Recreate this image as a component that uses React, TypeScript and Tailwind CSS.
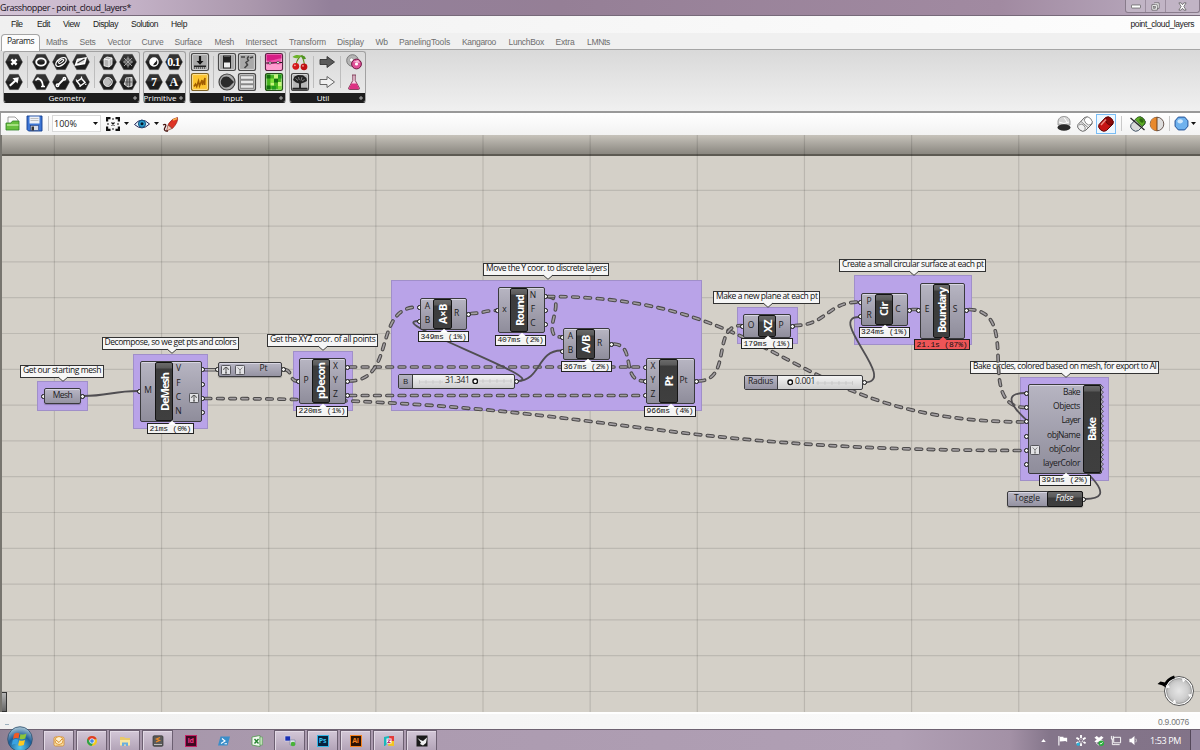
import React, { useLayoutEffect, useRef } from "react";

/* Text whose letter spacing is adjusted so that it fills the width w. */
function Fit({ w, children, className = "" }: { w: number; children: string; className?: string }) {
  const ref = useRef<HTMLSpanElement>(null);
  useLayoutEffect(() => {
    const el = ref.current;
    if (!el) return;
    el.style.letterSpacing = "0px";
    const natural = el.getBoundingClientRect().width;
    el.style.letterSpacing = `${(w - natural) / children.length}px`;
  }, [w, children]);
  return (
    <span ref={ref} className={`block shrink-0 whitespace-pre leading-none ${className}`}>
      {children}
    </span>
  );
}

const UI = "font-['Open_Sans',sans-serif]";

/* ---------- Ribbon ---------- */

function Hex({ children }: { children: React.ReactNode }) {
  return (
    <svg viewBox="0 0 20 20" className="h-5 w-5">
      <path d="M5.7 2.4h8.6L18.4 10l-4.1 7.6H5.7L1.6 10z" fill="#1c1c1c" stroke="#3c3c3c" strokeWidth=".6" strokeLinejoin="round" />
      <path d="M6 3h8l3.4 6.2c-5 .3-10 .3-14.8 0z" fill="#fff" opacity=".1" />
      <g fill="none" stroke="#fff" strokeWidth="1.5">{children}</g>
    </svg>
  );
}

function Tile({ children, bg = "#a9a9a9", line = "#4a4a4a" }: { children: React.ReactNode; bg?: string; line?: string }) {
  return (
    <svg viewBox="0 0 20 20" className="h-5 w-5">
      <rect x="1.5" y="1.5" width="17" height="17" rx="1.8" fill={bg} stroke={line} strokeWidth="1.2" />
      <rect x="2.6" y="2.6" width="14.8" height="14.8" rx="1" fill="none" stroke="#fff" strokeOpacity=".55" strokeWidth=".9" />
      {children}
    </svg>
  );
}

const I = {
  cross: <Hex><path d="M7.400 7.400l5.200 5.200M12.600 7.400l-5.200 5.200" strokeWidth="2.300" /></Hex>,
  arrow: <Hex><path d="M5.800 13.800l5.500-5" strokeWidth="2.200" /><path d="M8.500 6.300l6.300-1-1.200 6.300z" fill="#fff" stroke="none" /></Hex>,
  ring: <Hex><ellipse cx="10" cy="10" rx="4.800" ry="3.600" strokeWidth="1.900" /></Hex>,
  arc: <Hex><path d="M6 7c3.500-.5 5.500 2 6 7" strokeWidth="1.800" /><path d="M4.500 8.500l3-3M10 14.500h4" /></Hex>,
  swirl: <Hex><ellipse cx="10" cy="10" rx="6" ry="3.200" transform="rotate(-35 10 10)" strokeWidth="1.300" /><ellipse cx="10.500" cy="9.500" rx="3" ry="1.200" transform="rotate(-35 10 10)" strokeWidth="1" /></Hex>,
  bone: <Hex><path d="M7 13l6-6" strokeWidth="1.800" /><circle cx="6.500" cy="13.300" r="1.200" /><circle cx="13.400" cy="6.700" r="1.200" /></Hex>,
  sheet: <Hex><path d="M4.500 13l2-5.500 8.500-1.500-1.500 5.500z" fill="#ddd" /><path d="M6.500 11l7-4" stroke="#333" strokeWidth="1.300" /></Hex>,
  grid: <Hex><path d="M6 9.500l4.500-3 3.500 4-4.500 3.200z" strokeWidth="1.400" /><path d="M5 7.500l1.800 2.500M14 12.500l1.500-.5M9 15v-1.500M10.500 4.500v2" strokeWidth="1.200" /></Hex>,
  box: <Hex><path d="M6 7l3-2 5 1v6.500L11 15l-5-1.200z" fill="#b5b5b5" strokeWidth=".8" /><path d="M6 7l5 1v7M11 8l3-2" strokeWidth=".8" /></Hex>,
  atom: <Hex><path d="M6 6l8 8M14 6l-8 8M10 4.500v11M5 10h10" stroke="#aaa" strokeWidth=".9" /><circle cx="10" cy="10" r="3.300" stroke="#aaa" strokeWidth=".8" /></Hex>,
  blob: <Hex><path d="M5.500 10c0-3 3-5 5-4.500s4 2 3.800 4.500-2 4.500-4.500 4.500-4.300-2-4.300-4.500z" fill="#bdbdbd" strokeWidth=".8" /><path d="M10.500 6l3.500 4-3.500 4" stroke="#777" strokeWidth=".7" /></Hex>,
  mesh: <Hex><path d="M6 12c1-1 1.500-3 2-6l6-.5V14L10 15z" fill="#999" strokeWidth=".8" /><path d="M9 6v8M11.500 6v8.500M7 10h7" stroke="#333" strokeWidth=".6" /></Hex>,
  ball: <Hex><circle cx="10" cy="10" r="4" /><path d="M6 10a4 4 0 0 1 6.800-2.800c0 3-3 3-3.800 6.600A4 4 0 0 1 6 10z" fill="#fff" stroke="none" /></Hex>,
  cherries: (
    <svg viewBox="0 0 20 20" className="h-5 w-5">
      <path d="M6 12.500C7 8 9 5 12 3.500c1 3 2 6 2.500 9" fill="none" stroke="#5f8a1e" strokeWidth="1.100" />
      <path d="M2.500 5c3-3 6-2 9-1.500-2 3-5 3.500-9 1.500z" fill="#6db32c" />
      <path d="M11 4c3-1 4 0 5 3-3 .5-4.500-.5-5-3z" fill="#4e9422" />
      <circle cx="5.800" cy="14.300" r="3.400" fill="#d3181a" /><circle cx="14" cy="14.800" r="3.400" fill="#c01013" />
      <circle cx="4.900" cy="13.300" r=".9" fill="#f7a6a0" /><circle cx="13" cy="13.800" r=".9" fill="#f7a6a0" />
    </svg>
  ),
  tree: <Tile bg="#b5b5b5" line="#444"><path d="M3 8l1.500-3.500L8 3l5 .3L16.500 6l.5 3-3 1.500-3 1V16H9v-4.500l-3-1z" fill="#222" /><path d="M2.500 16.700h15" stroke="#222" strokeWidth="2" /><path d="M5.500 6.500l2.500 2M12 5l-1 3.500M14.500 7.500l-2.500 1.500M8.500 5l.8 3" stroke="#aaa" strokeWidth=".7" /></Tile>,
  arrowDark: <svg viewBox="0 0 20 20" className="h-5 w-5"><path d="M3 7.500h7V4.500l7.500 5.500-7.500 5.500v-3H3z" fill="#5a5a5a" stroke="#333" strokeWidth=".9" /></svg>,
  arrowLight: <svg viewBox="0 0 20 20" className="h-5 w-5"><path d="M3 7.500h7V4.500l7.500 5.500-7.500 5.500v-3H3z" fill="#f1f1f1" stroke="#666" strokeWidth="1" /></svg>,
  discs: (
    <svg viewBox="0 0 20 20" className="h-5 w-5">
      <circle cx="8.500" cy="8.500" r="5.800" fill="#b5b5b5" stroke="#666" strokeWidth=".8" />
      <circle cx="7.500" cy="8" r="2" fill="#fff" stroke="#888" strokeWidth=".6" />
      <circle cx="12.500" cy="12" r="4.900" fill="#df4f96" stroke="#6e1a44" strokeWidth="1" />
      <path d="M9 10l7 1-2-3z" fill="#fbd3e5" opacity=".8" />
      <circle cx="12.500" cy="12" r="1.600" fill="#fff" />
    </svg>
  ),
  flask: (
    <svg viewBox="0 0 20 20" className="h-5 w-5">
      <path d="M8 3h4M8.800 3v5.500L4.600 16q-.4 1.500 1.300 1.500h8.200q1.700 0 1.300-1.500L11.200 8.500V3" fill="#f7d7e5" stroke="#7d3553" strokeWidth=".9" />
      <path d="M7.400 11.500h5.200l2.500 4.800q0 .8-1 .8H5.900q-1 0-1-.8z" fill="#dd3283" />
    </svg>
  ),
  import: <Tile><path d="M10 4v7" stroke="#111" strokeWidth="2.200" /><path d="M6.500 9h7L10 12.800z" fill="#111" /><path d="M4 14.300h12" stroke="#222" strokeWidth="1.600" /><path d="M4 16h12" stroke="#222" strokeWidth="1" strokeDasharray="1 1" /></Tile>,
  scribble: <Tile bg="#fcc52f" line="#7d6225"><path d="M4 14.500l1.500-2.500 1.200 2.500L8.500 9l1 5 2.500-6 .5 5L15 6l-.3 7" fill="none" stroke="#a05c00" strokeWidth="1.500" /></Tile>,
  slider: <Tile><rect x="6.500" y="4" width="7" height="12" fill="#eee" stroke="#222" /><rect x="7" y="4.500" width="6" height="6" fill="#222" /></Tile>,
  knob: <svg viewBox="0 0 20 20" className="h-5 w-5"><circle cx="10" cy="10" r="8" fill="#aaa" stroke="#444" strokeWidth="1.200" /><path d="M9.500 4.500a5.500 5.500 0 0 1 4 2L17 10l-3.500 3.500a5.500 5.500 0 1 1-4-9z" fill="#2b2b2b" /></svg>,
  graph: <Tile><path d="M4 5h4M12 4.500c-2 1-2 3-.5 3.500M12 8l-3 2.500 1.500 2.500-3 3M13 6l3-1" stroke="#444" strokeWidth="1.600" fill="none" /></Tile>,
  list: <Tile bg="#888"><path d="M4 5.500h12M4 10h12M4 14.500h12" stroke="#e9e9e9" strokeWidth="2.500" /></Tile>,
  gradient: <Tile bg="#f254ad" line="#5b2344"><path d="M2.500 2.500h15v4c-6 0-8 3-15 2z" fill="#d61d85" /><path d="M2.500 13c6-2 9 0 15-1v5.500h-15z" fill="#ff9ccf" /><path d="M2 11h3M7 11c3 0 4-.500 6-.500M15 10.500h3" stroke="#222" strokeWidth="1" fill="none" /><circle cx="6" cy="11" r="1.200" fill="#fff" stroke="#222" strokeWidth=".6" /><circle cx="14" cy="10.500" r="1.200" fill="#fff" stroke="#222" strokeWidth=".6" /></Tile>,
  pixels: (
    <Tile bg="#44b31c" line="#254f18">
      <path d="M2.500 2.500h4v4h-4zM10 6.500h4v4h-4zM2.500 13.500h4v4h-4z" fill="#14700f" />
      <path d="M10 2.500h4v4h-4zM6.500 10.500h3.500v3H6.500zM14 10h3.500v4H14z" fill="#c9f57e" />
      <path d="M6.500 6.500H10v4H6.500zM14 14h3.500v3.500H14z" fill="#7fe03a" /><path d="M14 2.500h3.500v4H14zM8 14h4v3.500H8z" fill="#239a1e" />
    </Tile>
  ),
};

function HexText({ t }: { t: string }) {
  return (
    <div className="relative h-5 w-5">
      <Hex><path d="" /></Hex>
      <span className="absolute inset-0 flex items-center justify-center font-['Liberation_Serif',serif] text-[12px] font-bold leading-none tracking-[-0.8px] text-white">{t}</span>
    </div>
  );
}

function Col({ children }: { children: React.ReactNode }) {
  return <div className="flex h-10 w-5 flex-col">{children}</div>;
}
const Sep = () => <div className="mx-[3px] my-1 h-8 w-px bg-[#bdbdbd]" />;

function Panel({ name, w, children }: { name: string; w: string; children: React.ReactNode }) {
  return (
    <div className={`flex h-[52px] flex-col overflow-hidden rounded-[3px] border border-[#a2a2a2] border-b-[#1d1d1d] bg-gradient-to-b from-[#dadada] to-[#ececec] ${w}`}>
      <div className="flex h-[41px] shrink-0">{children}</div>
      <div className={`relative -mx-px flex h-[10px] shrink-0 items-center justify-center bg-[#1d1d1d] pb-px pr-[8px] text-[8px] leading-none text-white ${UI}`}>
        <span>{name}</span>
        <svg viewBox="0 0 6 6" className="absolute right-[3px] h-[4px] w-[4px]"><path d="M3 0v6M0 3h6" stroke="#bbb" strokeWidth="1.400" /></svg>
      </div>
    </div>
  );
}

/* ---------- Canvas ---------- */

type Box = { x: number; y: number; w: number; h: number };
const at = (b: Box) => ({ left: b.x, top: b.y, width: b.w, height: b.h });

const groups: Box[] = [
  { x: 37, y: 381, w: 51, h: 30 },
  { x: 133, y: 353.5, w: 75, h: 75 },
  { x: 292.5, y: 351, w: 60, h: 60 },
  { x: 390.5, y: 280, w: 311.5, h: 131 },
  { x: 736.5, y: 307, w: 61.5, h: 37 },
  { x: 854, y: 275, w: 118, h: 69.5 },
  { x: 1020, y: 377, w: 89, h: 103.5 },
];

const notes: (Box & { t: string; tail: number })[] = [
  { x: 20, y: 365, w: 83.5, h: 13, tail: 42, t: "Get our starting mesh" },
  { x: 101.5, y: 337, w: 137, h: 13, tail: 69, t: "Decompose, so we get pts and colors" },
  { x: 267, y: 334, w: 111, h: 13, tail: 55, t: "Get the XYZ coor. of all points" },
  { x: 483, y: 263, w: 126, h: 13, tail: 63.5, t: "Move the Y coor. to discrete layers" },
  { x: 713, y: 290.5, w: 107, h: 13, tail: 54, t: "Make a new plane at each pt" },
  { x: 839, y: 258.5, w: 147, h: 13, tail: 74, t: "Create a small circular surface at each pt" },
  { x: 970, y: 361, w: 189, h: 13, tail: 95, t: "Bake circles, colored based on mesh, for export to AI" },
];

const timers: (Box & { t: string; tail: number; hot?: boolean })[] = [
  { x: 147, y: 423, w: 46.5, h: 11, tail: 23.5, t: "21ms (0%)" },
  { x: 296, y: 405.5, w: 52, h: 11, tail: 25.5, t: "220ms (1%)" },
  { x: 418, y: 331, w: 51, h: 11, tail: 25, t: "349ms (1%)" },
  { x: 495, y: 334.5, w: 51, h: 11, tail: 25.5, t: "407ms (2%)" },
  { x: 561, y: 361, w: 51, h: 11, tail: 25.5, t: "367ms (2%)" },
  { x: 644, y: 405.5, w: 52, h: 11, tail: 25.5, t: "966ms (4%)" },
  { x: 741, y: 338, w: 52, h: 11, tail: 26, t: "179ms (1%)" },
  { x: 858.5, y: 326.5, w: 51.5, h: 11, tail: 25.5, t: "324ms (1%)" },
  { x: 914, y: 339, w: 56, h: 11, tail: 28, t: "21.1s (87%)", hot: true },
  { x: 1039, y: 474.5, w: 51.5, h: 11, tail: 25.5, t: "391ms (2%)" },
];

type Pin = [label: string, x: number, y: number];
type NodeData = Box & { name: string; len: number; bx: number; bw: number; ins: Pin[]; outs: Pin[] };
const nodes: NodeData[] = [
  { name: "DeMesh", len: 38, x: 140, y: 361, w: 61.5, h: 61, bx: 15, bw: 18, ins: [["M", 148, 390.5]], outs: [["V", 178.5, 369], ["F", 178.5, 383.5], ["C", 178.5, 398], ["N", 178.5, 412]] },
  { name: "pDecon", len: 36, x: 299, y: 358, w: 47, h: 46, bx: 12.5, bw: 18.5, ins: [["P", 306, 380.5]], outs: [["X", 335.5, 366.5], ["Y", 335.5, 380.5], ["Z", 335.5, 395]] },
  { name: "A×B", len: 20, x: 420, y: 298, w: 47, h: 32, bx: 13, bw: 18.5, ins: [["A", 427.5, 306.5], ["B", 427.5, 320.5]], outs: [["R", 456.5, 313.5]] },
  { name: "Round", len: 31, x: 498, y: 287, w: 46.5, h: 46, bx: 12, bw: 18, ins: [["x", 504.5, 310]], outs: [["N", 533, 295.5], ["F", 533, 310], ["C", 533, 324]] },
  { name: "A/B", len: 18, x: 563, y: 327.5, w: 47, h: 32, bx: 13, bw: 18.5, ins: [["A", 570.5, 336.5], ["B", 570.5, 350.5]], outs: [["R", 599.5, 343.5]] },
  { name: "Pt", len: 10.5, x: 646, y: 358, w: 49, h: 46, bx: 13, bw: 18.5, ins: [["X", 653, 366.5], ["Y", 653, 380.5], ["Z", 653, 395]], outs: [["Pt", 683.5, 380.5]] },
  { name: "XZ", len: 12.5, x: 743, y: 314, w: 48, h: 23.5, bx: 15, bw: 18, ins: [["O", 751, 325.5]], outs: [["P", 781, 325.5]] },
  { name: "Cir", len: 14, x: 861, y: 293, w: 47, h: 32.5, bx: 13.5, bw: 18, ins: [["P", 869, 301.5], ["R", 869, 316]], outs: [["C", 898, 309.5]] },
  { name: "Boundary", len: 45, x: 919.5, y: 282.5, w: 45.5, h: 56, bx: 13, bw: 17.5, ins: [["E", 927, 309.5]], outs: [["S", 955, 309.5]] },
];

const solid = [
  "M83 396C108 396 113 391 138 391",
  "M204 368.500H216M204 371H216",
  "M517 381C541 381 537 350.500 561 350.500",
  "M517 381C555 381 383 321 418 321",
  "M864 382.500C900 382.500 826 317 859 317",
  "M1085 499C1155 499 958 393 1026 393",
];
const dashed = [
  "M284 369.500C293 370 289 381 297 381",
  "M204 398.500C615 398.500 615 450.500 1026 450.500",
  "M349 367H644",
  "M349 395.500H644",
  "M349 381C397 381 372 307 418 307",
  "M470 313.500C482 313.500 485 310.500 496 310.500",
  "M547 296.500C570 296.500 538 337 561 337",
  "M547 296.500C787 296.500 787 422 1026 422",
  "M613 344C637 344 620 381 644 381",
  "M698 381C733 381 711 325.500 741 325.500",
  "M794 325.500C827 325.500 827 302 859 302",
  "M911 309.500H918",
  "M968 309.500C1024 309.500 973 407.500 1026 407.500",
];

const metal = "rounded-[2px] border border-[#3a3a3d] bg-gradient-to-b from-[#b7b5c2] to-[#8f8d9b] shadow-[inset_0_1px_0_#d8d6e2]";
const pill = "rounded-[2px] border border-[#3a3a3d] bg-gradient-to-b from-[#b9b7c5] to-[#9593a2] shadow-[inset_0_1px_0_#d8d6e2,0_1px_1px_rgba(0,0,0,0.25)]";
const black = "rounded-[2px] border border-[#141414] bg-[linear-gradient(180deg,#6a6a6a_0,#5a5a5a_5px,#3b3b3b_6px,#3f3f3f_100%)]";

function Port({ x, y }: { x: number; y: number }) {
  return <div className="absolute -ml-[2.5px] -mt-[2.5px] h-[5px] w-[5px] rounded-full border border-[#111] bg-[#f0f0f0]" style={{ left: x, top: y }} />;
}

function PinLabel({ pin: [t, x, y] }: { pin: Pin }) {
  return (
    <span className={`absolute -ml-[10px] -mt-[6px] flex h-[11px] w-5 items-center justify-center text-[8.5px] leading-none text-[#1b1b20] ${UI}`} style={{ left: x, top: y }}>
      {t}
    </span>
  );
}

/* Component name that reads from bottom to top, len pixels long. */
function VText({ children, len }: { children: string; len: number }) {
  const ref = useRef<HTMLSpanElement>(null);
  useLayoutEffect(() => {
    const el = ref.current;
    if (!el) return;
    el.style.letterSpacing = "0px";
    el.style.letterSpacing = `${(len - el.getBoundingClientRect().height) / children.length}px`;
  }, [len, children]);
  return <span ref={ref} className={`block shrink-0 rotate-180 whitespace-nowrap text-[11px] font-bold leading-none text-white [text-orientation:sideways] [writing-mode:vertical-rl] ${UI}`}>{children}</span>;
}

function Modifier({ b, kind }: { b: Box; kind: "graft" | "flatten" }) {
  return (
    <svg viewBox="0 0 10 10" className="absolute" style={at(b)}>
      <rect x=".5" y=".5" width="9" height="9" rx=".8" fill="#e3e3e6" stroke="#4a4a50" strokeWidth=".9" />
      {kind === "graft" ? (
        <path d="M5 8V2.500M2.500 5Q3 2.500 5 2.300Q7 2.500 7.500 5M4 8h2" fill="none" stroke="#444" strokeWidth=".9" />
      ) : (
        <path d="M5 8V5L2.700 2.500M5 5l2.300-2.500M4 8h2" fill="none" stroke="#777" strokeWidth=".9" />
      )}
    </svg>
  );
}

function Canvas() {
  const cols = Array.from({ length: 11 }, (_, i) => 54.4 + i * 107.15);
  const rows = Array.from({ length: 15 }, (_, i) => 190.3 + i * 35.8);
  const bake: [string, number, number][] = [["Bake", 392.5, 17], ["Objects", 406.5, 27], ["Layer", 421, 18.5], ["objName", 435.5, 33], ["objColor", 449.5, 31], ["layerColor", 464, 37]];
  return (
    <div className="absolute left-0 top-[-135px] h-[750px] w-[1200px]">
      <svg viewBox="0 0 1200 750" className="absolute inset-0 h-full w-full">
        {cols.map((x) => <path key={x} d={`M${x} 135V713`} stroke="#000" strokeOpacity=".12" strokeWidth="1.200" />)}
        {rows.map((y) => <path key={y} d={`M0 ${y}H1200`} stroke="#000" strokeOpacity=".11" strokeWidth="1.200" />)}
      </svg>
      {groups.map((g) => <div key={g.x} className="absolute border border-[#a08fc9] bg-[#b9a3e8]" style={at(g)} />)}
      {notes.map((n) => (
        <div key={n.t} className="absolute flex items-center justify-start border border-[#333] bg-[#f6f6f6] pb-[2px] pl-[2px] text-[#111]" style={at(n)}>
          <Fit w={n.w - 5.5} className={`text-[8.5px] ${UI}`}>{n.t}</Fit>
          <svg viewBox="0 0 10 6" className="absolute top-[10px] h-[6px] w-[10px] -translate-x-1/2" style={{ left: n.tail }}>
            <path d="M0 .7L5 5l5-4.300z" fill="#f6f6f6" /><path d="M0 1L5 5.300L10 1" fill="none" stroke="#333" strokeWidth=".9" />
          </svg>
        </div>
      ))}
      <svg viewBox="0 0 1200 750" fill="none" className="absolute inset-0 h-full w-full">
        {dashed.map((d) => (
          <g key={d} strokeLinecap="round" strokeDasharray="5.600 6.700" strokeDashoffset="-1">
            <path d={d} stroke="#4d4b4b" strokeWidth="3.700" />
            <path d={d} stroke="#a39fa2" strokeWidth="1.600" />
          </g>
        ))}
        {solid.map((d, i) => <path key={d} d={d} stroke="#504e52" strokeWidth={i === 1 ? 1.2 : 1.8} />)}
      </svg>

      {nodes.map((n) => (
        <React.Fragment key={n.name}>
          {n.ins.map((p) => <Port key={p[0]} x={n.x - 1} y={p[2] + 0.5} />)}
          {n.outs.map((p) => <Port key={p[0]} x={n.x + n.w + 1} y={p[2] + 0.5} />)}
          <div className={`absolute ${metal}`} style={at(n)}>
            <div className={`absolute inset-y-0 flex items-center justify-center ${black}`} style={{ left: n.bx - 1, width: n.bw }}>
              <VText len={n.len}>{n.name}</VText>
            </div>
          </div>
          {[...n.ins, ...n.outs].map((p) => <PinLabel key={p[0] + p[1]} pin={p} />)}
        </React.Fragment>
      ))}
      <Modifier b={{ x: 188.5, y: 393, w: 10, h: 10 }} kind="graft" />

      <Port x={43} y={396} /><Port x={82} y={396} />
      <div className={`absolute flex items-center justify-center pb-[2px] text-[#1b1b20] ${pill}`} style={at({ x: 44, y: 388, w: 37, h: 15.5 })}>
        <Fit w={19.5} className={`text-[8.5px] ${UI}`}>Mesh</Fit>
      </div>
      <Port x={217} y={369.5} /><Port x={283} y={369.5} />
      <div className={`absolute ${pill}`} style={at({ x: 218, y: 362, w: 64, h: 15 })} />
      <Modifier b={{ x: 220.5, y: 364.5, w: 10, h: 10 }} kind="graft" />
      <Modifier b={{ x: 234.5, y: 364.5, w: 10, h: 10 }} kind="flatten" />
      <PinLabel pin={["Pt", 263.5, 369]} />

      <Port x={516} y={381} />
      <div className="absolute flex rounded-[2px] border border-[#3a3a3d] bg-gradient-to-b from-[#f4f4f4] to-[#cfcfcf]" style={at({ x: 398, y: 373.5, w: 117, h: 15 })}>
        <div className={`flex w-[14px] items-center justify-center border-r border-[#3a3a3d] bg-gradient-to-b from-[#b9b7c5] to-[#9593a2] pb-px text-[8px] leading-none ${UI}`}>B</div>
        <div className="flex flex-1 items-center pl-8">
          <Fit w={24.5} className={`pb-[2px] text-[8.5px] text-[#222] ${UI}`}>31.341</Fit>
          <svg viewBox="0 0 7 7" className="ml-[2px] h-[6.5px] w-[6.5px] shrink-0"><circle cx="3.500" cy="3.500" r="2.500" fill="#fff" stroke="#111" strokeWidth="1.500" /></svg>
          <svg viewBox="0 0 34 6" className="h-[6px] w-[34px]"><path d="M0 3H34M5 1v4M12 1v4M19 1v4M26 1v4M33 1v4" stroke="#c2c2c2" strokeWidth=".7" /></svg>
        </div>
        <svg viewBox="0 0 24 6" className="absolute left-[20px] top-[4px] h-[6px] w-[24px]"><path d="M0 3H24M.5 1v4M7 1v4M14 1v4M21 1v4" stroke="#c6c6c6" strokeWidth=".7" /></svg>
      </div>

      <Port x={864} y={382.5} />
      <div className="absolute flex rounded-[2px] border border-[#3a3a3d] bg-gradient-to-b from-[#f4f4f4] to-[#cfcfcf]" style={at({ x: 743.5, y: 375, w: 119, h: 15 })}>
        <div className="flex w-[33px] items-center justify-center border-r border-[#3a3a3d] bg-gradient-to-b from-[#b9b7c5] to-[#9593a2] pb-[2px]">
          <Fit w={25} className={`text-[8.5px] text-[#1b1b20] ${UI}`}>Radius</Fit>
        </div>
        <div className="flex flex-1 items-center pl-[9px]">
          <svg viewBox="0 0 7 7" className="mr-[2px] h-[6.5px] w-[6.5px] shrink-0"><circle cx="3.500" cy="3.500" r="2.500" fill="#fff" stroke="#111" strokeWidth="1.500" /></svg>
          <Fit w={20} className={`pb-[2px] text-[8.5px] text-[#222] ${UI}`}>0.001</Fit>
          <svg viewBox="0 0 38 6" className="h-[6px] w-[38px]"><path d="M1 3H38M3 1v4M10 1v4M17 1v4M24 1v4M31 1v4M37.500 1v4" stroke="#c2c2c2" strokeWidth=".7" /></svg>
        </div>
      </div>

      {bake.map(([t, y]) => <Port key={t} x={1026.5} y={y + 0.5} />)}
      <div className={`absolute ${metal}`} style={at({ x: 1027.5, y: 384, w: 74, h: 90 })}>
        <svg viewBox="0 0 5 88" className="absolute -right-[3px] top-0 h-[88px] w-[5px]">
          <path d={"M0 0H2" + "l2.500 2.400l-2.500 2.400".repeat(18) + "V88H0z"} fill="#a9a7b4" stroke="#444" strokeWidth=".8" />
        </svg>
        <div className={`absolute inset-y-0 left-[54px] flex w-[18px] items-center justify-center ${black}`}>
          <VText len={23}>Bake</VText>
        </div>
      </div>
      {bake.map(([t, y, w]) => (
        <div key={t} className="absolute -mt-[6px] flex h-[11px] items-center justify-end text-[#1b1b20]" style={{ left: 1040, top: y, width: 40 }}>
          <Fit w={w} className={`text-[8.5px] ${UI}`}>{t}</Fit>
        </div>
      ))}
      <Modifier b={{ x: 1029.5, y: 445, w: 10, h: 10 }} kind="flatten" />

      <Port x={1083} y={499} />
      <div className={`absolute flex ${pill}`} style={at({ x: 1006.5, y: 491, w: 76, h: 16 })}>
        <div className="flex w-[39px] items-center justify-center pb-[2px]"><Fit w={26} className={`text-[8.5px] text-[#1b1b20] ${UI}`}>Toggle</Fit></div>
        <div className={`-my-px -mr-px flex flex-1 items-center justify-center pb-[2px] ${black}`}><Fit w={17.5} className={`text-[8.5px] italic text-white ${UI}`}>False</Fit></div>
      </div>

      {timers.map((n) => (
        <div key={n.t} className={`absolute flex items-center justify-center border border-[#222] ${n.hot ? "bg-[#ee5557]" : "bg-[#f4f4f4]"}`} style={at(n)}>
          <svg viewBox="0 0 10 5" className="absolute -top-[4px] h-[5px] w-[9px] -translate-x-1/2" style={{ left: n.tail }}>
            <path d="M0 5L5 .500l5 4.500z" fill={n.hot ? "#ee5557" : "#fff"} />
          </svg>
          <Fit w={n.w - 5} className="font-['Liberation_Mono',monospace] text-[8px] text-[#111]">{n.t}</Fit>
        </div>
      ))}

      {/* compass */}
      <svg viewBox="0 0 40 40" className="absolute left-[1156px] top-[670px] h-10 w-10">
        <defs><radialGradient id="dial"><stop offset="0" stopColor="#e6e6e6" /><stop offset=".7" stopColor="#cfcfcf" /><stop offset="1" stopColor="#b9b9b9" /></radialGradient></defs>
        <circle cx="23" cy="21" r="14.500" fill="#fdfdfd" stroke="#555" strokeWidth="1" />
        <circle cx="23" cy="21" r="12.500" fill="url(#dial)" stroke="#777" strokeWidth=".6" />
        <path d="M26 8.500l3.500 1.500-2.500 2.500zM35.500 24l-1.500 3.500-2-3zM20 33.500l-3.500-1.500 2.500-2.500zM10.500 18l1.500-3.500 2 3z" fill="#fff" />
        <path d="M9 15Q11.500 9 18.500 6.800" fill="none" stroke="#000" strokeWidth="2.800" />
        <path d="M1.500 14l3-2.500 4.500 1 1 5-4-2.300z" fill="#000" />
      </svg>
    </div>
  );
}

/* ---------- Page ---------- */

const menus: [string, number, string][] = [["File", 11.5, "w-[26px]"], ["Edit", 13, "w-[26px]"], ["View", 16.5, "w-[30px]"], ["Display", 25, "w-[38px]"], ["Solution", 27, "w-[40px]"], ["Help", 16, "w-[30px]"]];
const tabs: [string, number, string][] = [
  ["Maths", 21.5, "w-[33.500px]"], ["Sets", 16, "w-[28px]"], ["Vector", 23.5, "w-[34px]"], ["Curve", 22, "w-[33px]"], ["Surface", 27.5, "w-[40px]"], ["Mesh", 19.5, "w-[31px]"], ["Intersect", 31.5, "w-[43.500px]"],
  ["Transform", 37, "w-[48px]"], ["Display", 27, "w-[38.500px]"], ["Wb", 12, "w-[23.500px]"], ["PanelingTools", 51, "w-[63px]"], ["Kangaroo", 34, "w-[46.500px]"], ["LunchBox", 35.5, "w-[47px]"], ["Extra", 19, "w-[31.500px]"], ["LMNts", 23, "w-[40px]"],
];
const Caret = ({ className = "" }: { className?: string }) => (
  <svg viewBox="0 0 5 3" className={`h-[3px] w-[5px] shrink-0 ${className}`}><path d="M0 0h5L2.500 3z" fill="#111" /></svg>
);

function Cylinder({ a, b, line, children }: { a: string; b: string; line: string; children?: React.ReactNode }) {
  return (
    <svg viewBox="0 0 18 18" className="h-[18px] w-[18px] shrink-0">
      <path d="M2 9.500L8.500 2.500Q11 .8 14 3.500T16 9L9.500 15.500Q6.500 17.500 3.500 14.800T2 9.500z" fill={a} stroke={line} strokeWidth="1" />
      <ellipse cx="12.300" cy="6" rx="4.400" ry="3.300" transform="rotate(48 12.300 6)" fill={b} stroke={line} strokeWidth=".7" />
      {children}
    </svg>
  );
}

function TaskIcon({ k }: { k: number }) {
  const c = "h-3 w-3";
  switch (k) {
    case 0:
      return <svg viewBox="0 0 12 12" className={c}><rect x="1" y="2" width="10" height="9" rx="1.500" fill="#f6dca4" stroke="#d28a2d" strokeWidth=".8" /><circle cx="6" cy="5.500" r="4" fill="#fff1cf" stroke="#e09a38" /><path d="M3 5l3 2.500L9 4" fill="none" stroke="#d28a2d" /></svg>;
    case 1:
      return <svg viewBox="0 0 12 12" className={c}><circle cx="6" cy="6" r="5" fill="#f2c91c" /><path d="M1.300 4.200A5 5 0 0 1 10.700 4.200H6L4 7z" fill="#dc3b2c" /><path d="M1.500 3.800A5 5 0 0 0 5.500 11l2-3.500L4 7z" fill="#2ba24a" /><circle cx="6" cy="6" r="2.300" fill="#4286e8" stroke="#fff" strokeWidth=".8" /></svg>;
    case 2:
      return <svg viewBox="0 0 12 12" className={c}><path d="M1 2h4l1 1h5v7H1z" fill="#e8c96b" /><path d="M1 5h10v5.500H1z" fill="#f8e6a2" /><path d="M3 7.500h6v3.500H7V9.500H5V11H3z" fill="#6aaede" /></svg>;
    case 3:
      return <svg viewBox="0 0 12 12" className={c}><rect x="1" y=".8" width="10" height="10.500" rx="1.200" fill="#5a5a5a" stroke="#333" strokeWidth=".7" /><path d="M8 2.500L4.500 4 7.500 5.500 4 7" stroke="#f08a24" strokeWidth="1.300" fill="none" /><path d="M2 9.500h8" stroke="#bbb" /></svg>;
    case 5:
      return <svg viewBox="0 0 12 12" className={c}><path d="M2.500 1.500H12L9.500 10.500H0z" fill="#3b8ec9" /><path d="M4 3.500L7 6 3 8.500M6.500 8.700h2.500" stroke="#fff" strokeWidth="1.100" fill="none" /></svg>;
    case 6:
      return <svg viewBox="0 0 12 12" className={c}><path d="M1 2l8-1.500v11L1 10z" fill="#f4faf2" stroke="#4f9a4c" strokeWidth=".8" /><path d="M9 2h2.500v8H9z" fill="#bfe0b6" stroke="#4f9a4c" strokeWidth=".5" /><path d="M3.500 4l4 4.500M7.500 4l-4 4.500" stroke="#278431" strokeWidth="1.400" /></svg>;
    case 7:
      return <svg viewBox="0 0 12 12" className={c}><path d="M1 1h5.500v5H1z" fill="#1a2fb2" stroke="#dcdcf4" strokeWidth=".6" /><path d="M6 5h5v5H6z" fill="#e5e9f1" stroke="#6b7e9d" strokeWidth=".6" /><circle cx="9" cy="9" r="2.300" fill="#49b339" /></svg>;
    case 10:
      return <svg viewBox="0 0 12 12" className={c}><path d="M1 2l5-1 .5 5L2 11H1z" fill="#1bb7ba" /><path d="M6 1h5v5L6.500 6z" fill="#e33a3a" /><path d="M11 6v5l-6-.2L6 6z" fill="#f3c421" /><rect x="3.500" y="3.500" width="5" height="5" fill="#fff" /><path d="M4.500 5h3l-3 2.500h3" stroke="#c02b74" fill="none" /></svg>;
    case 11:
      return <svg viewBox="0 0 12 12" className={c}><rect x=".5" y=".5" width="11" height="11" fill="#1a1a1a" /><path d="M1.500 3l3 2 2.500 1L11 2.500 10 8 7 10.500 4 9 5 7.500z" fill="#efefef" /></svg>;
    default: {
      const s = k === 4 ? "bg-[#400a22] text-[#ef3582] border-[#c42467]" : k === 8 ? "bg-[#08233d] text-[#34c5f4] border-[#34b5e4]" : "bg-[#2c1303] text-[#f58220] border-[#f58220]";
      return <div className={`flex h-3 w-3 items-center justify-center border pb-px text-[7px] font-bold leading-none tracking-[-0.3px] ${UI} ${s}`}>{k === 4 ? "Id" : k === 8 ? "Ps" : "Ai"}</div>;
    }
  }
}

export default function App() {
  return (
    <div className="flex h-[750px] w-[1200px] flex-col overflow-hidden bg-[#f0f0f0] font-['Liberation_Sans',sans-serif] text-[#1a1a1a]">
      {/* title bar */}
      <header className="flex h-4 shrink-0 items-start justify-between border-b border-[#776a7a] bg-[linear-gradient(90deg,#d3c4d6_0,#c6b4c9_120px,#ab98ad_250px,#93809a_330px,#957f96_560px,#a18aa1_1000px,#b3a2b7_1130px,#c9bfcd_1200px)]">
        <Fit w={131} className={`pt-[3px] text-[9px] text-[#15101a] ${UI}`}>Grasshopper - point_cloud_layers*</Fit>
        <div className="flex h-[13px] w-[75px] rounded-b-[3px] border border-t-0 border-[#887b8b] bg-[#c1b4c5]">
          <div className="flex w-[20px] items-center justify-center border-r border-[#9b8d9e]"><svg viewBox="0 0 10 5" className="h-[5px] w-[10px]"><rect x=".5" y="1" width="9" height="3" rx=".5" fill="#fff" stroke="#555" strokeWidth=".7" /></svg></div>
          <div className="flex w-[20px] items-center justify-center border-r border-[#9b8d9e]"><svg viewBox="0 0 10 10" className="h-[9px] w-[9px]"><path d="M3.500 1h5.500v6H7M1 3h6v6H1z" fill="#fff" stroke="#555" strokeWidth=".8" /><rect x="3" y="5" width="2" height="2" fill="#999" stroke="#555" strokeWidth=".6" /></svg></div>
          <div className="flex flex-1 items-center justify-center"><svg viewBox="0 0 10 10" className="h-[9px] w-[9px]"><path d="M1 1h2.500L5 3l1.500-2H9L6.500 5 9 9H6.500L5 7 3.500 9H1l2.500-4z" fill="#fff" stroke="#555" strokeWidth=".8" /></svg></div>
        </div>
      </header>

      {/* menu */}
      <nav className="flex h-[17px] shrink-0 items-center justify-between bg-gradient-to-r from-[#f0f0f0] to-[#fdfdfd] pl-[11px] pr-[6px]">
        <div className="flex items-center">
          {menus.map(([t, w, cls]) => <div key={t} className={`flex ${cls}`}><Fit w={w} className="text-[8.5px]">{t}</Fit></div>)}
        </div>
        <Fit w={63.5} className="text-[8.5px]">point_cloud_layers</Fit>
      </nav>

      {/* tabs */}
      <div className="flex h-[17px] shrink-0 items-end bg-[#f0f0f0]">
        <div className="z-10 mb-[-1px] ml-[1px] flex h-[17px] w-[39px] shrink-0 items-center justify-center rounded-t-[4px] border border-b-0 border-[#a5a5a5] bg-[#fcfcfc] pb-[4px]">
          <Fit w={27} className={`text-[8.5px] ${UI}`}>Params</Fit>
        </div>
        <div className="flex h-[17px] flex-1 items-center border-b border-[#a5a5a5] pl-[6px] pt-[2px] text-[#6e6e6e]">
          {tabs.map(([t, w, cls]) => <div key={t} className={`flex ${cls}`}><Fit w={w} className="text-[8.5px]">{t}</Fit></div>)}
        </div>
      </div>

      {/* ribbon */}
      <div className="flex h-[61px] shrink-0 items-start gap-[3px] bg-gradient-to-b from-[#d9d9d9] to-[#f0f0f0] pl-[2.5px] pt-[1px]">
        <Panel name="Geometry" w="w-[137px]">
          <Col>{I.cross}{I.arrow}</Col><Sep />
          <Col>{I.ring}{I.arc}</Col><Col>{I.swirl}{I.bone}</Col><Col>{I.sheet}{I.grid}</Col><Sep />
          <Col>{I.box}{I.blob}</Col><Col>{I.atom}{I.mesh}</Col>
        </Panel>
        <Panel name="Primitive" w="w-[43px]">
          <Col>{I.ball}<HexText t="7" /></Col>
          <Col><HexText t="0.1" /><HexText t="A" /></Col>
        </Panel>
        <Panel name="Input" w="w-[97px]">
          <Col>{I.import}{I.scribble}</Col><Sep />
          <Col>{I.slider}{I.knob}</Col><Col>{I.graph}{I.list}</Col><Sep />
          <Col>{I.gradient}{I.pixels}</Col>
        </Panel>
        <Panel name="Util" w="w-[77px]">
          <Col>{I.cherries}{I.tree}</Col><Sep />
          <Col>{I.arrowDark}{I.arrowLight}</Col><Sep />
          <Col>{I.discs}{I.flask}</Col>
        </Panel>
      </div>

      {/* canvas toolbar */}
      <div className="flex h-6 shrink-0 items-center border-l border-t-2 border-[#999] bg-gradient-to-b from-white to-[#f2f2f2] pb-px pl-[4px]">
        <svg viewBox="0 0 16 17" className="h-[17px] w-4"><path d="M3 2h7l3 3v8H3z" fill="#fdfdfd" stroke="#888" strokeWidth=".8" /><path d="M1 8l5 0 1.500-2H14v9H1z" fill="#68bf3e" stroke="#2f8024" strokeWidth=".8" /><path d="M2 9h11.500v2H2z" fill="#a5e07f" /></svg>
        <svg viewBox="0 0 17 17" className="ml-[5px] h-[17px] w-[17px]"><path d="M1 1h15v15H2.500L1 14.500z" fill="#3c76d6" stroke="#123c8d" strokeWidth=".9" /><rect x="3.500" y="1.500" width="10" height="7" fill="#eef2f8" /><path d="M4.500 3.500h8M4.500 5.500h8" stroke="#aaa" strokeWidth=".7" /><rect x="4.500" y="10.500" width="8" height="5" fill="#d6dce8" stroke="#203f7d" strokeWidth=".6" /><rect x="5.500" y="11.500" width="2.500" height="4" fill="#333" /></svg>
        <div className="ml-[5px] h-[15px] w-px bg-[#c9c9c9]" />
        <div className="ml-[3px] flex h-[17px] w-[49px] items-center border border-[#dadada] bg-white pl-[1px]">
          <Fit w={23} className={`text-[9px] ${UI}`}>100%</Fit><Caret className="ml-auto mr-[2px]" />
        </div>
        <svg viewBox="0 0 14 14" className="ml-[5px] h-[14px] w-[14px]"><path d="M1 4.500V1h3.500M9.500 1H13v3.500M13 9.500V13H9.500M4.500 13H1V9.500" fill="none" stroke="#111" strokeWidth="2.400" /><path d="M5.500 5.500l3 3M8.500 5.500l-3 3" stroke="#111" strokeWidth="1.200" /><path d="M7 1v2M7 11v2M1 7h2M11 7h2" stroke="#111" /></svg>
        <Caret className="ml-[4px] h-[2.5px] w-[4px]" />
        <svg viewBox="0 0 16 11" className="ml-[5px] h-[12px] w-4"><path d="M.5 6Q7.500-2.500 15.500 5.500Q8 13 .5 6z" fill="#e3f3fb" stroke="#225" strokeWidth="1" /><circle cx="8" cy="5.300" r="3.600" fill="#2a9dcf" stroke="#124e7d" /><circle cx="8" cy="5.300" r="1.500" fill="#061a2c" /></svg>
        <Caret className="ml-[4px] h-[2.5px] w-[4px]" />
        <svg viewBox="0 0 17 16" className="ml-[3px] h-4 w-[17px]"><path d="M6 8.500Q10 2 15.500 1.500Q16.500 6 10.500 12.500z" fill="#de3325" stroke="#86150d" strokeWidth=".6" /><path d="M11 4l4-1.500" stroke="#f7b24a" strokeWidth="1.800" /><path d="M6 9l4 3.500L4.500 15z" fill="#f0c9b8" stroke="#7a1c10" strokeWidth=".6" /><path d="M1 9c3-1.500 3.500 0 2 2.500s0 4 3 3.500" fill="none" stroke="#43120e" strokeWidth="1.300" /></svg>
        <div className="ml-auto flex items-center">
          <svg viewBox="0 0 16 18" className="h-[18px] w-4"><path d="M2 6Q3 1.500 8 1.500T14 6v4H2z" fill="#d5d5d5" stroke="#888" strokeWidth=".8" /><ellipse cx="8" cy="12.500" rx="6.500" ry="3.300" fill="#2a2a2a" /><path d="M8 2.500l3 4.500M3 7q5 3 10 0" stroke="#fff" fill="none" /></svg>
          <div className="ml-[4px] flex"><Cylinder a="#f2f2f2" b="#fff" line="#666"><path d="M5 6.500l7 6M3 10q2-2 4.500 0T9 15" fill="none" stroke="#888" /></Cylinder></div>
          <div className="ml-[2px] flex h-5 w-5 items-center justify-center border border-[#79bdf5] bg-[#eef7fe]"><Cylinder a="#c51414" b="#8d0a0a" line="#5c0505"><path d="M4 10l5-5.500" stroke="#f08a80" strokeWidth="1.500" /></Cylinder></div>
          <div className="ml-[5px] h-[15px] w-px bg-[#c9c9c9]" />
          <div className="ml-[7px] flex"><Cylinder a="#d9d9d9" b="#58a81f" line="#456"><path d="M6 4.500L9 2Q12 1 14.500 4T15.500 9L13 11.500z" fill="#5cab25" stroke="#244e0d" strokeWidth=".6" /><path d="M1.500 3l14 12" stroke="#222" strokeWidth="1.200" /><ellipse cx="12.500" cy="5.500" rx="2.600" ry="1.700" transform="rotate(45 12.500 5.500)" fill="#2f6d10" /></Cylinder></div>
          <svg viewBox="0 0 16 16" className="ml-[2px] h-4 w-4"><circle cx="8" cy="8" r="6.800" fill="#dedede" stroke="#5c4a42" strokeWidth=".9" /><path d="M8 1.200a6.800 6.800 0 0 0 0 13.600z" fill="#e8892d" /><path d="M8 1v14" stroke="#5f3413" strokeWidth=".9" /></svg>
          <div className="ml-[4px] h-[15px] w-px bg-[#c9c9c9]" />
          <svg viewBox="0 0 14 14" className="ml-[4px] h-[15px] w-[15px]"><path d="M4 1h6l3 3.500v5L10 13H4L1 9.500v-5z" fill="#6fb2ee" stroke="#1c4b92" strokeWidth=".9" /><ellipse cx="5.800" cy="5" rx="2.500" ry="2" fill="#cfe8fc" /></svg>
          <Caret className="ml-[2px] mr-[4px] h-[2.5px] w-[4px]" />
        </div>
      </div>

      {/* canvas */}
      <main className="relative h-[577px] shrink-0 overflow-hidden border-l-2 border-[#77756f] bg-[#d4d0c8]">
        <div className="h-[19px] bg-gradient-to-b from-[#c7c3bb] to-[#8a8780]" />
        <div className="h-[2px] bg-[#5d5a53]" />
        <div className="absolute -left-[2px] top-0 h-full w-[1200px]"><Canvas /></div>
        <div className="absolute -left-px bottom-0 h-[20px] w-[6px] border border-[#333] bg-gradient-to-b from-[#b5b5b5] to-[#666]" />
      </main>

      {/* status bar */}
      <div className="flex h-[17px] shrink-0 items-center justify-between border-t-2 border-white bg-gradient-to-r from-[#f0f0f0] via-[#f6f6f6] to-[#fdfdfd] pl-[5px] pr-[11px] text-[#777]">
        <span className="mt-[5px] h-px w-[4px] bg-[#9db0bd]" />
        <Fit w={31} className="mt-[1px] text-[8.5px]">0.9.0076</Fit>
      </div>

      {/* taskbar */}
      <footer className="relative flex h-[21px] shrink-0 items-stretch border-t border-[#6e6272] bg-[linear-gradient(90deg,#8e8093_0,#a596a9_60px,#ac9bb0_420px,#b09fb4_900px,#a391a6_1010px,#84758a_1050px,#827388_1200px)] pl-[43px]">
        <svg viewBox="0 0 26 26" className="absolute left-[6.500px] top-[-4px] h-[26px] w-[26px]">
          <defs><radialGradient id="orb" cx=".5" cy=".85" r=".8"><stop offset="0" stopColor="#56c8ef" /><stop offset=".6" stopColor="#1b5f9c" /><stop offset="1" stopColor="#9dbccf" /></radialGradient></defs>
          <circle cx="13" cy="13" r="12.300" fill="url(#orb)" stroke="#294d6b" strokeWidth=".8" />
          <path d="M7 8q3-2 5.500-.5l-1 5q-2.500-1.200-5.500.5z" fill="#ee5a26" /><path d="M13.500 8q3 1.300 6-.5l-1.200 5q-3 1.500-5.800.2z" fill="#8cc53c" />
          <path d="M5.800 14q3-1.700 5.500-.3l-1.200 5q-2.500-1.300-5.300.3z" fill="#3aa3e3" /><path d="M12.300 14.200q3 1.300 5.700-.2l-1.200 5q-3 1.500-5.700.2z" fill="#fcc921" />
        </svg>
        {Array.from({ length: 12 }, (_, k) => {
          const open = k < 4 || k > 6;
          return (
            <div key={k} className={`mr-[2px] flex h-[21px] w-[31px] shrink-0 items-center justify-center ${open ? "border border-[#6c5f71] bg-gradient-to-b from-[#d3c7d7] to-[#b3a4b8] shadow-[inset_1px_1px_0_#e2d9e5]" : ""}`}>
              <TaskIcon k={k} />
            </div>
          );
        })}
        <div className="ml-auto flex items-center text-white">
          <svg viewBox="0 0 6 4" className="h-[3px] w-[5px]"><path d="M0 4L3 0l3 4z" fill="#fff" /></svg>
          <svg viewBox="0 0 12 12" className="ml-[11px] h-[11px] w-3"><path d="M1.500 1v10.500" stroke="#fff" strokeWidth="1.200" /><path d="M2.500 2h4v1h4v4.500l-2-1-2 .2-4 .3z" fill="#fff" /></svg>
          <svg viewBox="0 0 12 12" className="ml-[6px] h-[11px] w-3"><path d="M6 0v12M1 3l10 6M11 3L1 9" stroke="#fff" strokeWidth="2" strokeDasharray="3.500 1" /><circle cx="6" cy="6" r="1.500" fill="#827388" /><circle cx="3" cy="10" r="1.800" fill="#29b5dc" /></svg>
          <svg viewBox="0 0 12 12" className="ml-[6px] h-[11px] w-3"><path d="M1 3l2.500-2L6 3l2.500-2L11 3 8.500 5 11 7 8.500 8.500 6 7 3.500 8.500 1 7l2.500-2z" fill="#fff" /><path d="M3 9l3 2 1-1" stroke="#fff" /><circle cx="8.500" cy="9" r="3" fill="#2cae3d" /><path d="M7.200 9l1 1 1.700-2" stroke="#fff" fill="none" /></svg>
          <svg viewBox="0 0 12 12" className="ml-[5px] h-[11px] w-3"><path d="M3.500 2.500H11v6H3.500zM5 10.500h5M1 1v3.500h2V1M2 4.500v6h3" fill="none" stroke="#fff" strokeWidth="1" /></svg>
          <svg viewBox="0 0 12 12" className="ml-[6px] h-[11px] w-3"><path d="M1 4h2l3.500-3v10L3 8H1z" fill="#fff" /><path d="M8 4q1.200 2 0 4" fill="none" stroke="#ddd" /></svg>
          <Fit w={31} className={`ml-[10px] text-[9px] ${UI}`}>1:53 PM</Fit>
          <div className="ml-[9px] h-full w-[10px] border-l border-[#54485a] bg-[#9587a0]" />
        </div>
      </footer>
    </div>
  );
}
